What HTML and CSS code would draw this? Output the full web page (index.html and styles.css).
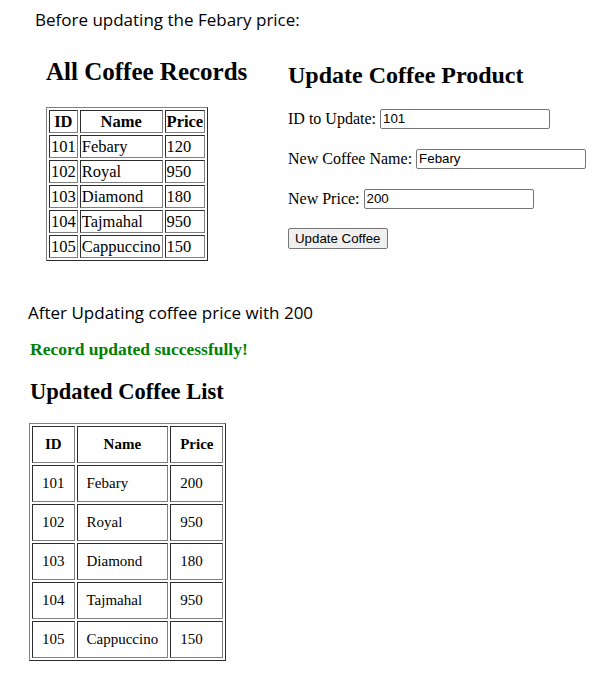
FILE: index.html
```html
<!DOCTYPE html>
<html>
<head>
<meta charset="utf-8">
<link rel="stylesheet" href="styles.css">
</head>
<body>
<p class="caption cap-before">Before updating the Febary price:</p>
<div class="before">
  <div class="records">
    <h2 class="title">All Coffee Records</h2>
    <table class="small-table">
      <tr><th>ID</th><th>Name</th><th>Price</th></tr>
      <tr><td>101</td><td>Febary</td><td>120</td></tr>
      <tr><td>102</td><td>Royal</td><td>950</td></tr>
      <tr><td>103</td><td>Diamond</td><td>180</td></tr>
      <tr><td>104</td><td>Tajmahal</td><td>950</td></tr>
      <tr><td>105</td><td>Cappuccino</td><td>150</td></tr>
    </table>
  </div>
  <form class="update-form">
    <h2 class="title form-title">Update Coffee Product</h2>
    <div class="field"><label>ID to Update:</label> <input type="text" value="101"></div>
    <div class="field"><label>New Coffee Name:</label> <input type="text" value="Febary"></div>
    <div class="field"><label>New Price:</label> <input type="text" value="200"></div>
    <div class="field"><button type="button">Update Coffee</button></div>
  </form>
</div>
<p class="caption cap-after">After Updating coffee price with 200</p>
<div class="after">
  <p class="success">Record updated successfully!</p>
  <h2 class="title list-title">Updated Coffee List</h2>
  <table class="big-table">
    <tr><th>ID</th><th>Name</th><th>Price</th></tr>
    <tr><td>101</td><td>Febary</td><td>200</td></tr>
    <tr><td>102</td><td>Royal</td><td>950</td></tr>
    <tr><td>103</td><td>Diamond</td><td>180</td></tr>
    <tr><td>104</td><td>Tajmahal</td><td>950</td></tr>
    <tr><td>105</td><td>Cappuccino</td><td>150</td></tr>
  </table>
</div>
</body>
</html>
```
FILE: styles.css
```css
html, body {
  margin: 0;
  padding: 0;
  background: #fff;
  color: #000;
  font-family: "Liberation Serif", "Times New Roman", serif;
}
.caption {
  font-family: "Open Sans", "Liberation Sans", sans-serif;
  font-size: 17px;
  line-height: 22px;
  margin: 0;
  color: #000;
}
.cap-before {
  padding: 9px 0 0 35px;
}
.before {
  display: flex;
  align-items: flex-start;
  margin-top: 25px;
}
.records {
  margin-left: 46px;
  width: 242px;
  padding-top: 2px;
}
.title {
  font-size: 24px;
  font-weight: bold;
  margin: 0;
  line-height: 28px;
}
.records .title {
  font-size: 25px;
}
.small-table {
  margin-top: 21px;
  border: 1px outset #808080;
  border-spacing: 2px;
  font-size: 16.5px;
}
.small-table th, .small-table td {
  border: 1px inset #808080;
  padding: 1px 1px;
  line-height: 19px;
}
.small-table td { text-align: left; }
.update-form {
  font-size: 16px;
  padding-top: 5px;
}
.form-title {
  margin-bottom: 19px;
}
.field {
  display: flex;
  align-items: center;
  gap: 4px;
  margin-bottom: 19px;
  height: 21px;
}
.field input {
  width: 164px;
  height: 16px;
  padding: 1px 2px;
  border: 1px solid #767676;
  border-radius: 2px;
  font-family: "Liberation Sans", Arial, sans-serif;
  font-size: 13.3px;
}
.field button {
  font-family: "Liberation Sans", Arial, sans-serif;
  font-size: 13.3px;
  padding: 2px 6px;
  border: 1px solid #767676;
  border-radius: 2px;
  background: #efefef;
}
.cap-after {
  padding: 34px 0 0 28px;
}
.after {
  margin-left: 30px;
}
.success {
  color: #008000;
  font-weight: bold;
  font-size: 17.5px;
  margin: 15px 0 0 0;
}
.list-title {
  margin-top: 18px;
  font-size: 22.5px;
}
.big-table {
  margin: 17px 0 0 -1px;
  border: 1px outset #808080;
  border-spacing: 2px;
  font-size: 15px;
}
.big-table th, .big-table td {
  border: 1px inset #808080;
  padding: 9px 9px;
  line-height: 17px;
}
.big-table td { text-align: left; }
```
